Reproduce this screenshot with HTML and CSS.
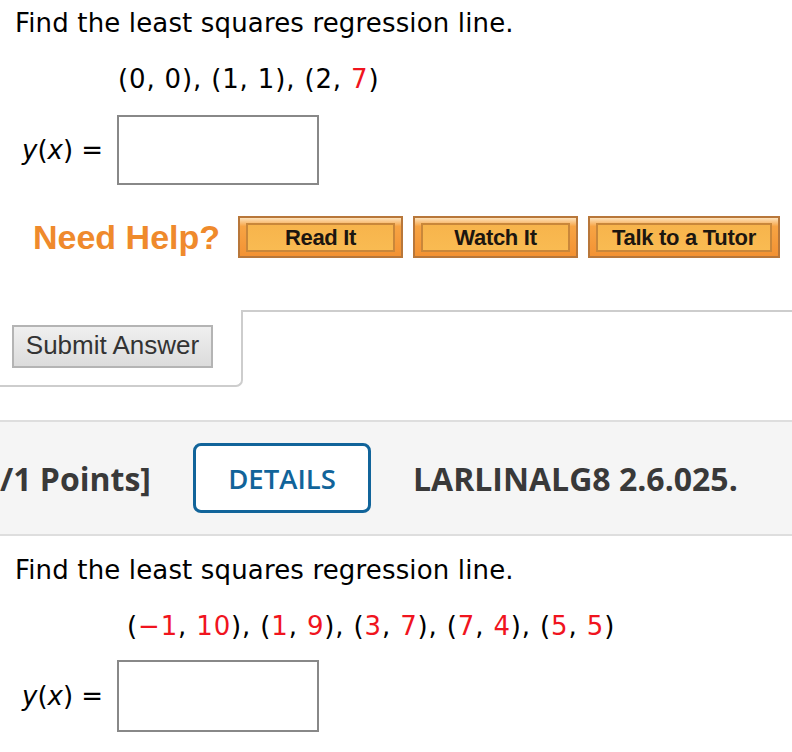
FILE: index.html
```html
<!DOCTYPE html>
<html>
<head>
<meta charset="utf-8">
<link rel="stylesheet" href="styles.css">
</head>
<body>
<div class="question first">
  <p class="prompt">Find the least squares regression line.</p>
  <p class="points">(0, 0), (1, 1), (2, <span class="red">7</span>)</p>
  <div class="answer">
    <span class="lbl"><i>y</i>(<i>x</i>) =</span>
    <span class="box"></span>
  </div>
  <div class="help">
    <span class="need">Need Help?</span>
    <span class="hbtn w-read"><span class="hin">Read It</span></span>
    <span class="hbtn w-watch"><span class="hin">Watch It</span></span>
    <span class="hbtn w-tutor"><span class="hin">Talk to a Tutor</span></span>
  </div>
</div>
<div class="submit-row">
  <div class="submit-cell"><button class="submit">Submit Answer</button></div>
  <div class="submit-rest"></div>
</div>
<div class="band">
  <span class="pts">/1 Points]</span>
  <span class="details">DETAILS</span>
  <span class="code">LARLINALG8 2.6.025.</span>
</div>
<div class="question second">
  <p class="prompt">Find the least squares regression line.</p>
  <p class="points p2">(<span class="red">−1</span>, <span class="red">10</span>), (<span class="red">1</span>, <span class="red">9</span>), (<span class="red">3</span>, <span class="red">7</span>), (<span class="red">7</span>, <span class="red">4</span>), (<span class="red">5</span>, <span class="red">5</span>)</p>
  <div class="answer">
    <span class="lbl"><i>y</i>(<i>x</i>) =</span>
    <span class="box"></span>
  </div>
</div>
</body>
</html>
```
FILE: styles.css
```css
html, body {
  margin: 0;
  padding: 0;
  background: #fff;
}
body {
  font-family: "DejaVu Sans", Verdana, sans-serif;
  color: #000;
  overflow: hidden;
}
.question.first { padding-top: 8px; }
.question.second { padding-top: 19px; }
.prompt {
  margin: 0 0 0 15px;
  font-size: 26px;
  line-height: 30px;
  letter-spacing: 0.15px;
}
.points {
  margin: 26px 0 0 118px;
  font-size: 26px;
  line-height: 30px;
  letter-spacing: 0.85px;
}
.points.p2 { margin-left: 127px; }
.red { color: #f0141e; }
.answer {
  margin-top: 21px;
  display: flex;
  align-items: center;
  height: 70px;
}
.second .answer { margin-top: 19px; height: 72px; }
.second .box { height: 68px; }
.lbl {
  margin-left: 22px;
  width: 95px;
  font-size: 26px;
  line-height: 30px;
  white-space: nowrap;
}
.lbl i { font-style: italic; }
.box {
  width: 198px;
  height: 66px;
  border: 2px solid #888;
  background: #fff;
}
.help {
  margin-top: 31px;
  display: flex;
  align-items: center;
  height: 42px;
}
.need {
  margin-left: 33px;
  margin-right: 20px;
  font-family: "Liberation Sans", Arial, sans-serif;
  font-weight: bold;
  font-size: 34px;
  color: #ef8a2c;
  width: 185px;
  white-space: nowrap;
}
.hbtn {
  box-sizing: border-box;
  height: 42px;
  margin-right: 10px;
  border: 2px solid #b8773a;
  background: linear-gradient(#fde2bb 0, #f7a444 22%, #f39233 100%);
  padding: 5px 6px 4px 6px;
  display: flex;
}
.w-read { width: 165px; }
.w-watch { width: 165px; }
.w-tutor { width: 192px; }
.hin {
  flex: 1;
  border: 2px solid #c9873a;
  background: linear-gradient(#f7b44c, #f9bb52);
  display: flex;
  align-items: center;
  justify-content: center;
  font-family: "Liberation Sans", Arial, sans-serif;
  font-weight: bold;
  font-size: 22px;
  letter-spacing: -0.3px;
  color: #1c1610;
  white-space: nowrap;
}
.submit-row {
  margin-top: 52px;
  display: flex;
}
.submit-cell {
  width: 243px;
  padding: 15px 0 17px 12px;
  box-sizing: border-box;
  border-right: 2px solid #cdcdcd;
  border-bottom: 2px solid #cdcdcd;
  border-bottom-right-radius: 7px;
}
.submit {
  display: block;
  width: 201px;
  height: 43px;
  margin: 0;
  padding: 0 0 2px 0;
  border: 2px solid #b4b4b4;
  background: linear-gradient(#efefef, #dcdcdc);
  font-family: "Liberation Sans", Arial, sans-serif;
  font-size: 26px;
  color: #333;
}
.submit-rest {
  flex: 1;
  border-top: 2px solid #cdcdcd;
}
.band {
  margin-top: 33px;
  height: 112px;
  border-top: 2px solid #dedede;
  border-bottom: 2px solid #dedede;
  background: #f5f5f5;
  display: flex;
  align-items: center;
  font-family: "Open Sans", sans-serif;
}
.pts {
  width: 193px;
  font-weight: bold;
  font-size: 32px;
  color: #393939;
  white-space: nowrap;
}
.details {
  box-sizing: border-box;
  width: 178px;
  height: 70px;
  border: 3px solid #11649a;
  border-radius: 8px;
  background: #fff;
  display: flex;
  align-items: center;
  justify-content: center;
  font-weight: 600;
  font-size: 27.5px;
  color: #11649a;
  padding-top: 0;
}
.code {
  margin-left: 42px;
  font-weight: bold;
  font-size: 32px;
  color: #393939;
  white-space: nowrap;
}
```
